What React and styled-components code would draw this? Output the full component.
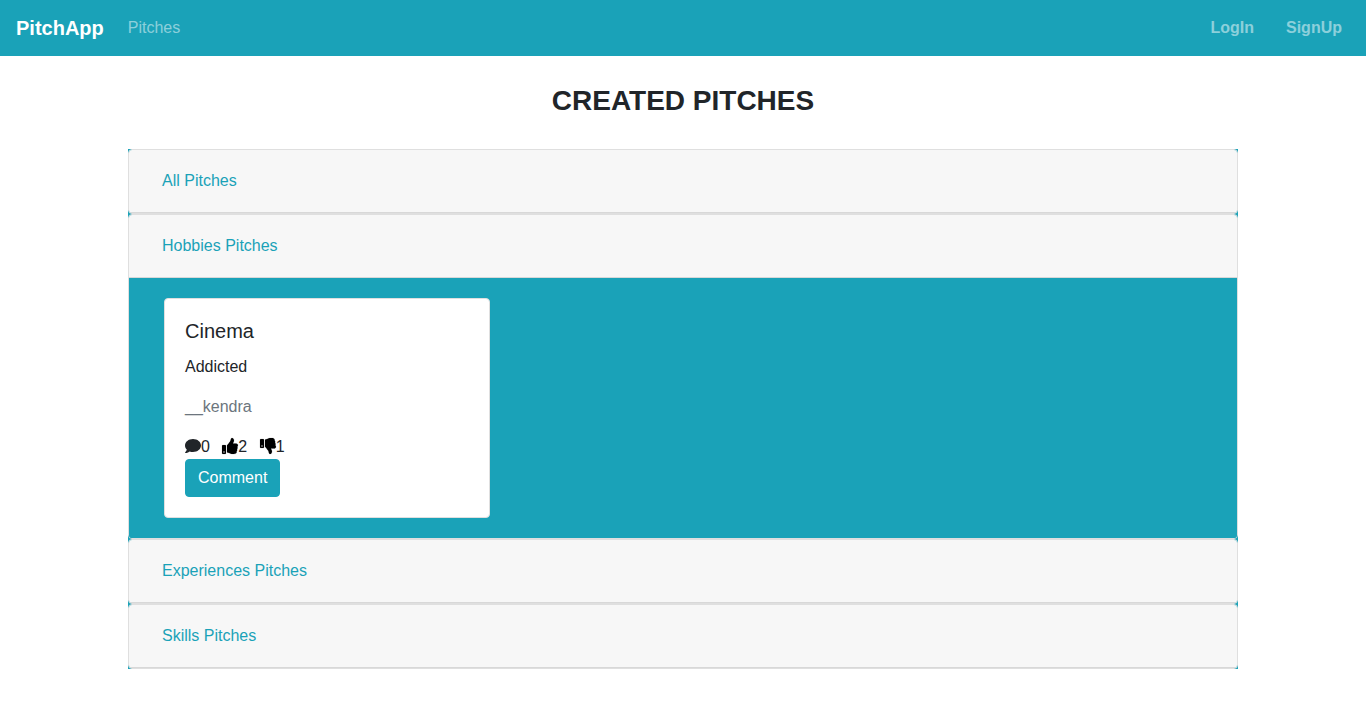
import React from 'react';
import styled, { createGlobalStyle } from 'styled-components';
import { FaComment, FaThumbsUp, FaThumbsDown } from 'react-icons/fa';

const TEAL = '#1aa2b8';

const GlobalStyle = createGlobalStyle`
  *, *::before, *::after { box-sizing: border-box; }
  body {
    margin: 0;
    background: #fff;
    color: #212529;
    font: 400 16px/1.5 "Liberation Sans", Arial, sans-serif;
  }
`;

const Navbar = styled.nav`
  display: flex;
  align-items: center;
  height: 56px;
  padding: 8px 16px;
  background: ${TEAL};
`;
const Brand = styled.a`
  margin-right: 16px;
  color: #fff;
  font-size: 20px;
  font-weight: 700;
  line-height: 30px;
`;
const NavGroup = styled.div`
  display: flex;
  gap: ${(p) => (p.$end ? '16px' : '0')};
  margin-left: ${(p) => (p.$end ? 'auto' : '0')};
`;
const NavLink = styled.a`
  padding: 8px;
  color: rgba(255, 255, 255, 0.5);
  font-weight: ${(p) => (p.$bold ? 700 : 400)};
`;

const Heading = styled.h3`
  margin: 28px 0 0;
  font-size: 28px;
  font-weight: 700;
  line-height: 33.6px;
  text-align: center;
`;
const Accordion = styled.main`
  width: 1110px;
  margin: 31.4px auto 0;
`;
const Section = styled.section`
  background: ${TEAL};
`;
const Panel = styled.div`
  border: 1px solid #dfdfdf;
  border-radius: 4px;
  overflow: hidden;
`;
const PanelHeader = styled.header`
  height: 63px;
  padding: 12px 20px;
  background: #f7f7f7;
  border-bottom: 1px solid #d8d8d8;
`;
const Toggle = styled.button`
  display: block;
  padding: 6px 12px;
  border: 1px solid transparent;
  background: transparent;
  color: ${TEAL};
  font: inherit;
`;
const PanelBody = styled.div`
  padding: 20px 35px;
  background: ${TEAL};
`;
const Card = styled.article`
  width: 326px;
  height: 220px;
  padding: 20px;
  border: 1px solid #dfdfdf;
  border-radius: 4px;
  background: #fff;
`;
const CardTitle = styled.h5`
  margin: 0 0 12px;
  font-size: 20px;
  font-weight: 400;
  line-height: 24px;
`;
const CardText = styled.p`
  margin: 0 0 16px;
  color: ${(p) => (p.$muted ? '#6c757d' : 'inherit')};
`;
const Votes = styled.div`
  display: flex;
  height: 24px;
  gap: 12.45px;
`;
const Vote = styled.span`
  display: flex;
  color: #212529;
  svg {
    width: 16px;
    height: 16px;
    margin-top: 3px;
    overflow: visible;
    color: ${(p) => (p.$dark ? '#000' : 'inherit')};
    stroke-width: ${(p) => (p.$dark ? 4 : 0)};
  }
`;
const CommentButton = styled.button`
  display: block;
  height: 38px;
  padding: 6px 12px;
  border: 1px solid ${TEAL};
  border-radius: 4px;
  background: ${TEAL};
  color: #fff;
  font: inherit;
`;

function PitchSection({ title, children }) {
  return (
    <Section>
      <Panel>
        <PanelHeader><Toggle>{title}</Toggle></PanelHeader>
        {children && <PanelBody>{children}</PanelBody>}
      </Panel>
    </Section>
  );
}

export default function App() {
  return (
    <>
      <GlobalStyle />
      <Navbar>
        <Brand>PitchApp</Brand>
        <NavGroup><NavLink>Pitches</NavLink></NavGroup>
        <NavGroup $end>
          <NavLink $bold>LogIn</NavLink>
          <NavLink $bold>SignUp</NavLink>
        </NavGroup>
      </Navbar>
      <Heading>CREATED PITCHES</Heading>
      <Accordion>
        <PitchSection title="All Pitches" />
        <PitchSection title="Hobbies Pitches">
          <Card>
            <CardTitle>Cinema</CardTitle>
            <CardText>Addicted</CardText>
            <CardText $muted>__kendra</CardText>
            <Votes>
              <Vote><FaComment />0</Vote>
              <Vote $dark><FaThumbsUp />2</Vote>
              <Vote $dark><FaThumbsDown />1</Vote>
            </Votes>
            <CommentButton>Comment</CommentButton>
          </Card>
        </PitchSection>
        <PitchSection title="Experiences Pitches" />
        <PitchSection title="Skills Pitches" />
      </Accordion>
    </>
  );
}
